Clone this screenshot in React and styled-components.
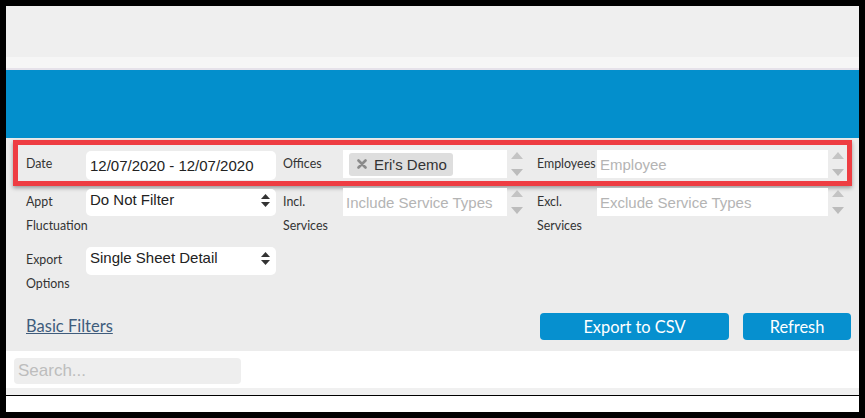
import React from "react";
import styled, { createGlobalStyle } from "styled-components";

const Global = createGlobalStyle`
  html, body { margin: 0; padding: 0; background: #000; }
  * { box-sizing: border-box; }
`;

const Frame = styled.div`
  width: 865px;
  height: 418px;
  padding: 6px;
  background: #000;
`;

const Page = styled.div`
  height: 406px;
  background: #fff;
  display: flex;
  flex-direction: column;
`;

const TopBar = styled.div`
  height: 51px;
  background: #efefef;
`;

const SubBar = styled.div`
  height: 13px;
  background: #f6f6f6;
  border-bottom: 2px solid #e6e2ea;
`;

const Header = styled.div`
  height: 68px;
  background: #038fcc;
`;

const FilterPanel = styled.div`
  height: 213px;
  background: #ececec;
  padding: 2px 7px 11px;
  display: flex;
  flex-direction: column;
`;

const Row = styled.div`
  display: grid;
  grid-template-columns: 257px 254px 1fr;
  align-items: start;
  margin-top: ${(p) => p.$top || 0}px;
  ${(p) =>
    p.$highlight
      ? `border: 5px solid #ee3d42; padding: 6px 0 1px 8px; box-shadow: 0 2px 4px rgba(0,0,0,0.35);`
      : `padding: 0 5px 0 13px;`}
`;

const Field = styled.div`
  display: flex;
  align-items: flex-start;
`;

const Label = styled.div`
  width: 60px;
  flex: none;
  padding-top: 1px;
  font-family: Lato, "Open Sans", sans-serif;
  font-size: 12.4px;
  line-height: 24px;
  color: #333;
  white-space: nowrap;
`;

const TextBox = styled.div`
  width: 190px;
  height: ${(p) => p.$h || 29}px;
  background: #fff;
  border-radius: 5px;
  padding: 0 4px;
  font-family: "Liberation Sans", Arial, sans-serif;
  font-size: 15px;
  line-height: ${(p) => p.$h || 29}px;
  color: #222;
`;

const SelectBox = styled.div`
  width: 190px;
  height: ${(p) => p.$h || 28}px;
  background: #fff;
  border-radius: 5px;
  padding: 0 4px;
  font-family: "Liberation Sans", Arial, sans-serif;
  font-size: 15px;
  line-height: 22px;
  color: #222;
  display: flex;
  justify-content: space-between;
  align-items: flex-start;
`;

const SelectArrows = styled.svg`
  margin-top: 5px;
  margin-right: 2px;
`;

const MultiWrap = styled.div`
  display: flex;
  flex: ${(p) => (p.$fill ? 1 : "none")};
`;

const MultiBox = styled.div`
  width: ${(p) => (p.$w ? `${p.$w}px` : "auto")};
  flex: ${(p) => (p.$w ? "none" : 1)};
  height: 28px;
  background: #fff;
  display: flex;
  align-items: center;
  padding: 0 3px;
  font-family: "Liberation Sans", Arial, sans-serif;
  font-size: 15px;
  margin-top: -1px;
`;

const Placeholder = styled.span`
  color: #b4b4b4;
  white-space: nowrap;
`;

const Chip = styled.span`
  display: inline-flex;
  align-items: center;
  gap: 7px;
  height: 23px;
  padding: 0 6px 0 8px;
  margin-left: 3px;
  background: #dedede;
  border-radius: 3px;
  color: #333;
  font-size: 15px;
`;

const Spinner = styled.div`
  width: ${(p) => p.$w || 20}px;
  height: 28px;
  margin-top: -1px;
  display: flex;
  flex-direction: column;
  justify-content: space-between;
  align-items: center;
  padding: 2px 0 2px;
`;

const ActionBar = styled.div`
  margin-top: 17px;
  height: 27px;
  display: flex;
  align-items: center;
  padding: 0 1px 0 13px;
`;

const Link = styled.a`
  font-family: Lato, "Open Sans", sans-serif;
  font-size: 16.5px;
  color: #3f5c7c;
  text-decoration: underline;
  cursor: pointer;
  margin-top: -2px;
`;

const Spacer = styled.div`
  flex: 1;
`;

const Button = styled.button`
  width: ${(p) => p.$w}px;
  height: 27px;
  margin-left: ${(p) => p.$ml || 0}px;
  border: none;
  border-radius: 4px;
  background: #0690cf;
  color: #fff;
  font-family: Lato, "Open Sans", sans-serif;
  font-size: 16.4px;
  padding: 0;
`;

const SearchStrip = styled.div`
  height: 37px;
  padding: 7px 8px 0;
  background: #fff;
`;

const SearchInput = styled.input`
  width: 227px;
  height: 26px;
  border: none;
  outline: none;
  border-radius: 4px;
  background: #eeeeee;
  padding: 0 4px;
  font-family: "Liberation Sans", Arial, sans-serif;
  font-size: 17px;
  color: #333;
  &::placeholder { color: #bdbdbd; }
`;

const GrayStrip = styled.div`
  height: 7px;
  background: #f0f0f0;
`;

const Rule = styled.div`
  height: 1px;
  background: #000;
`;

const Bottom = styled.div`
  flex: 1;
  background: #fff;
`;

const DoubleArrow = () => (
  <SelectArrows width="9" height="13" viewBox="0 0 9 13">
    <path d="M4.5 0 L9 5 H0 Z" fill="#333" />
    <path d="M0 8 H9 L4.5 13 Z" fill="#333" />
  </SelectArrows>
);

const SpinArrows = ({ w }) => (
  <Spinner $w={w}>
    <svg width="12" height="8" viewBox="0 0 12 8">
      <path d="M6 0 L12 7 H0 Z" fill="#c4c4c4" />
    </svg>
    <svg width="12" height="8" viewBox="0 0 12 8">
      <path d="M0 1 H12 L6 8 Z" fill="#bcbcbc" />
    </svg>
  </Spinner>
);

const XIcon = () => (
  <svg width="10" height="10" viewBox="0 0 10 10">
    <path d="M1.5 1.5 L8.5 8.5 M8.5 1.5 L1.5 8.5" stroke="#8a8a8a" strokeWidth="2.6" strokeLinecap="round" />
  </svg>
);

export default function App() {
  return (
    <>
      <Global />
      <Frame>
        <Page>
          <TopBar />
          <SubBar />
          <Header />
          <FilterPanel>
            <Row $highlight>
              <Field>
                <Label>Date</Label>
                <TextBox>12/07/2020 - 12/07/2020</TextBox>
              </Field>
              <Field>
                <Label>Offices</Label>
                <MultiWrap>
                  <MultiBox $w={164}>
                    <Chip>
                      <XIcon />
                      Eri's Demo
                    </Chip>
                  </MultiBox>
                  <SpinArrows />
                </MultiWrap>
              </Field>
              <Field>
                <Label>Employees</Label>
                <MultiWrap $fill>
                  <MultiBox>
                    <Placeholder>Employee</Placeholder>
                  </MultiBox>
                  <SpinArrows w={19} />
                </MultiWrap>
              </Field>
            </Row>
            <Row $top={3}>
              <Field>
                <Label>
                  Appt
                  <br />
                  Fluctuation
                </Label>
                <SelectBox $h={27}>
                  Do Not Filter
                  <DoubleArrow />
                </SelectBox>
              </Field>
              <Field>
                <Label>
                  Incl.
                  <br />
                  Services
                </Label>
                <MultiWrap>
                  <MultiBox $w={164}>
                    <Placeholder>Include Service Types</Placeholder>
                  </MultiBox>
                  <SpinArrows />
                </MultiWrap>
              </Field>
              <Field>
                <Label>
                  Excl.
                  <br />
                  Services
                </Label>
                <MultiWrap $fill>
                  <MultiBox>
                    <Placeholder>Exclude Service Types</Placeholder>
                  </MultiBox>
                  <SpinArrows w={19} />
                </MultiWrap>
              </Field>
            </Row>
            <Row $top={9}>
              <Field>
                <Label>
                  Export
                  <br />
                  Options
                </Label>
                <SelectBox $h={28}>
                  Single Sheet Detail
                  <DoubleArrow />
                </SelectBox>
              </Field>
            </Row>
            <ActionBar>
              <Link>Basic Filters</Link>
              <Spacer />
              <Button $w={189}>Export to CSV</Button>
              <Button $w={108} $ml={14}>Refresh</Button>
            </ActionBar>
          </FilterPanel>
          <SearchStrip>
            <SearchInput placeholder="Search..." />
          </SearchStrip>
          <GrayStrip />
          <Rule />
          <Bottom />
        </Page>
      </Frame>
    </>
  );
}
